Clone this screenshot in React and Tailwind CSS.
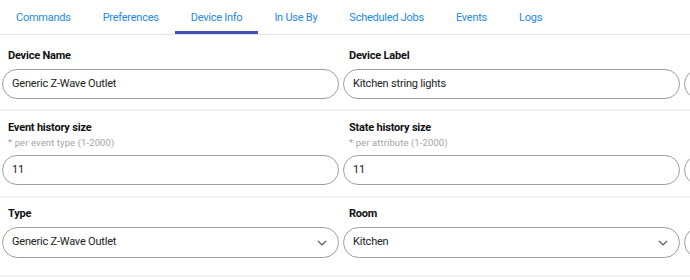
const tabs = ['Commands', 'Preferences', 'Device Info', 'In Use By', 'Scheduled Jobs', 'Events', 'Logs'];

const Chevron = () => (
  <svg width="10" height="6" viewBox="0 0 10 6" className="shrink-0">
    <path d="M1 1l4 4 4-4" fill="none" stroke="#555" strokeWidth="1.2" />
  </svg>
);

const Field = ({ label, sub, value, select }) => (
  <div className="w-[341px] shrink-0">
    <div className="px-[8px] h-4 text-[11px] leading-4 font-bold tracking-[-0.2px] text-[#111]">{label}</div>
    {sub !== undefined && (
      <div className="px-[8px] h-[14px] text-[9.5px] leading-[14px] tracking-[0.1px] text-[#a3a3a3]">{sub}</div>
    )}
    <div className={`mx-[2px] mt-[5px] ${select ? 'h-[31px]' : 'h-[30px]'} rounded-full border border-[#9e9e9e] flex items-center pl-[9px] pr-[11px] text-[11px] tracking-[-0.2px] text-[#212121]`}>
      <span className="flex-1">{value}</span>
      {select && <Chevron />}
    </div>
  </div>
);

export default function App() {
  return (
    <div className="w-[690px] h-[280px] overflow-hidden bg-white" style={{ fontFamily: 'Roboto, "Liberation Sans", sans-serif' }}>
      {/* Tabs */}
      <div className="flex h-[35px] border-b border-[#e3e3e3]">
        {tabs.map((t) => (
          <div
            key={t}
            className={`px-4 flex items-center text-[11px] tracking-[-0.25px] text-[#1e88e5] whitespace-nowrap ${
              t === 'Device Info' ? 'border-b-[3px] border-[#3f51b5] pt-[5px]' : 'pt-[2px]'
            }`}
          >
            {t}
          </div>
        ))}
      </div>

      {/* Name / label */}
      <div className="flex pt-[13px] pb-[10px] border-b-2 border-[#f2f2f2]">
        <Field label="Device Name" value="Generic Z-Wave Outlet" />
        <Field label="Device Label" value="Kitchen string lights" />
        <Field label="" value="" />
      </div>

      {/* History sizes */}
      <div className="flex pt-[9px] pb-[11px] border-b-2 border-[#f2f2f2]">
        <Field label="Event history size" sub="* per event type (1-2000)" value="11" />
        <Field label="State history size" sub="* per attribute (1-2000)" value="11" />
        <Field label="" sub="" value="" />
      </div>

      {/* Type / room */}
      <div className="flex pt-[8px] pb-[17px] border-b-2 border-[#f2f2f2]">
        <Field label="Type" value="Generic Z-Wave Outlet" select />
        <Field label="Room" value="Kitchen" select />
        <Field label="" value="" select />
      </div>
    </div>
  );
}
